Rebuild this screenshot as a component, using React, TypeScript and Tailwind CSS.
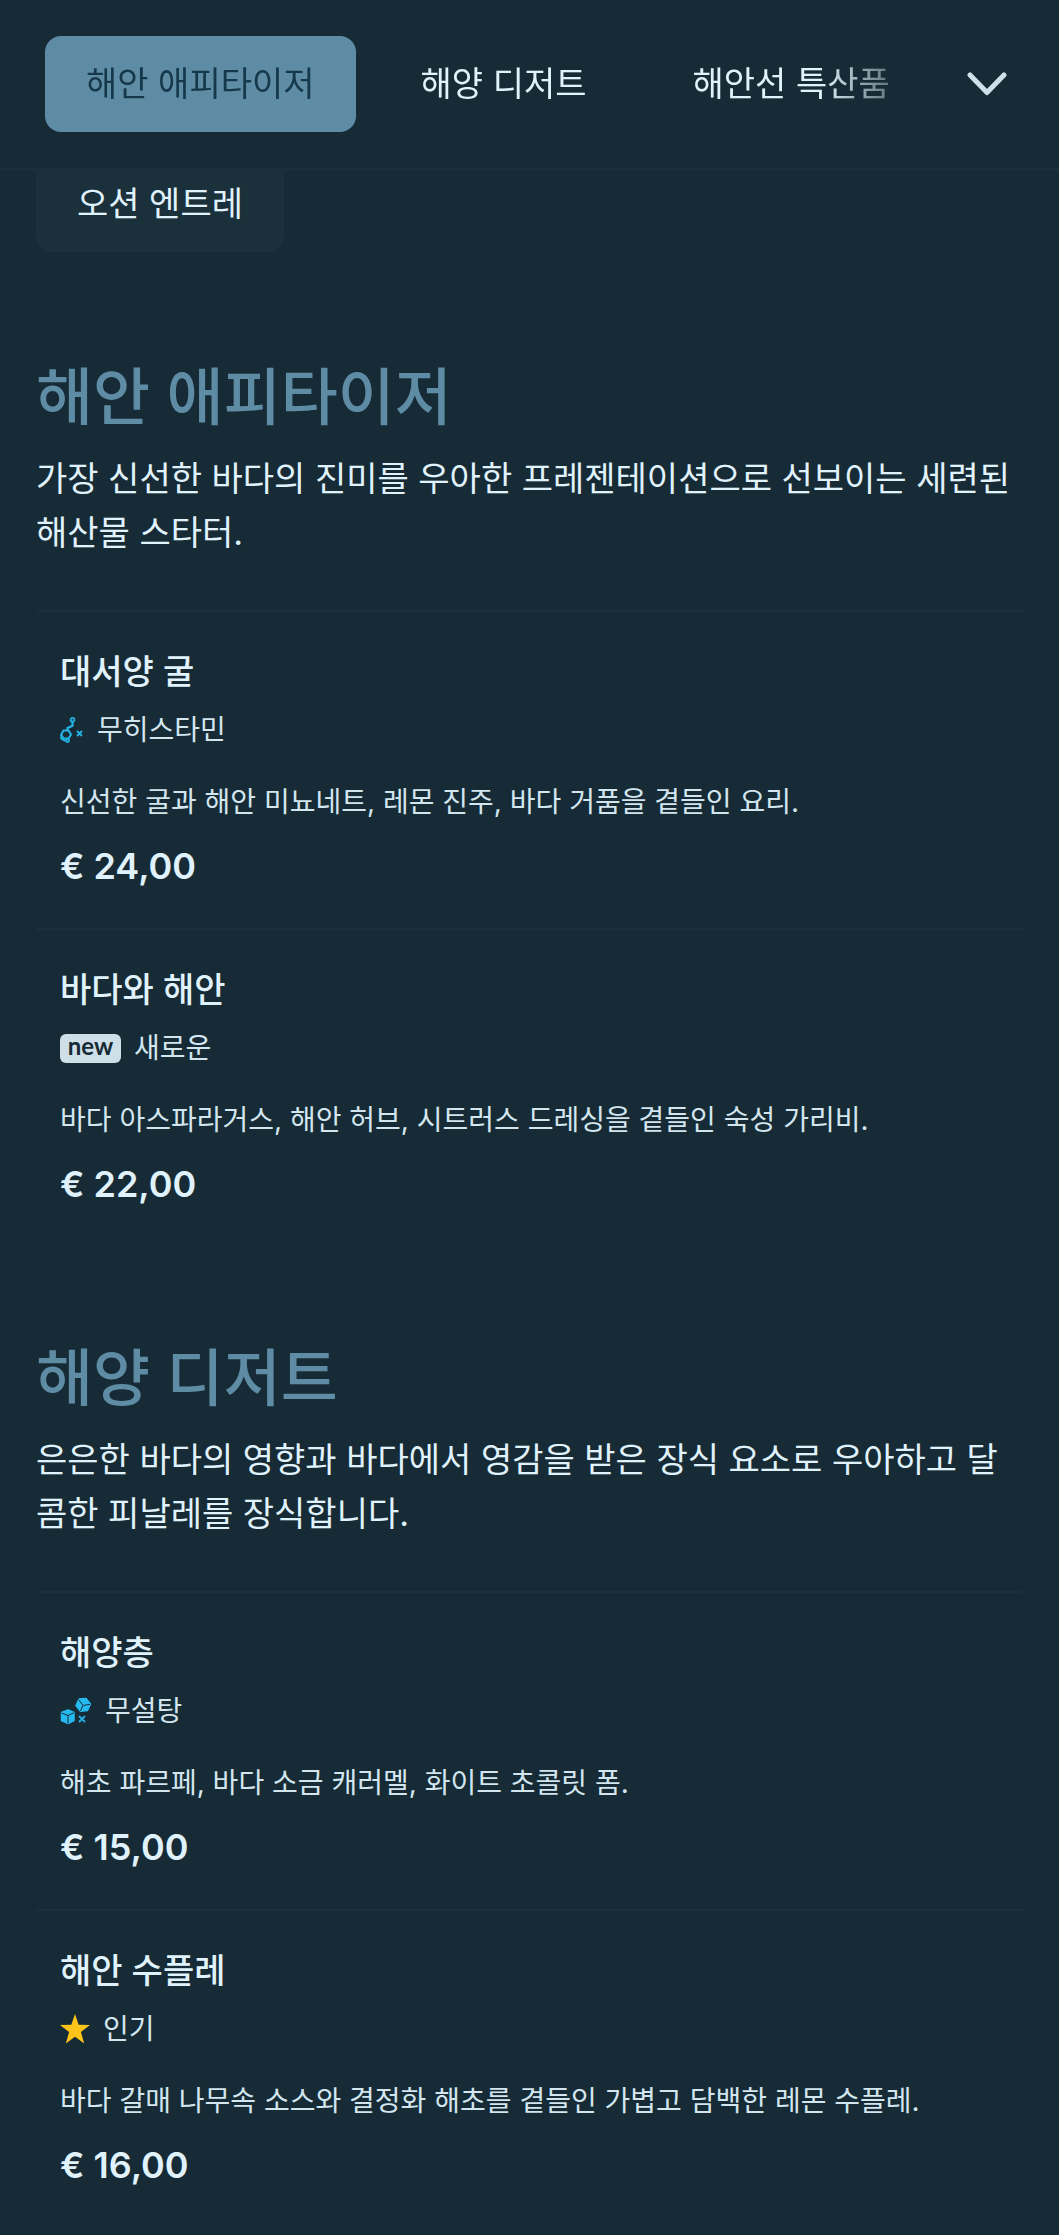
import { useState } from 'react';
import type { ReactNode } from 'react';

type Dish = {
  name: string;
  tag: string;
  icon: ReactNode;
  description: string;
  price: string;
};

type Category = {
  id: string;
  title: string;
  description: string;
  dishes: Dish[];
};

function HistamineIcon() {
  return (
    <svg viewBox="0 0 24 26" className="h-[26px] w-6" fill="none" stroke="#22b5e6" strokeWidth="1.8" aria-hidden="true">
      <circle cx="12.5" cy="2.8" r="1.9" />
      <path d="M12.500 4.700v4L7.500 11v3" strokeWidth="2.2" />
      <path d="M3.500 13.500h5l2.500 4-2.500 4h-5L1.200 17.500z" strokeWidth="2" />
      <path d="M1.200 17.500v4l4 2.500" />
      <circle cx="7.500" cy="23.500" r="1.500" />
      <path d="M17 14l5 5M22 14l-5 5" />
    </svg>
  );
}

function SugarIcon() {
  return (
    <svg viewBox="0 0 32 28" className="h-7 w-8" aria-hidden="true">
      <g fill="#26baf2" stroke="#26baf2" strokeWidth="1.5" strokeLinejoin="round">
        <path d="M19 2l7-.6 4.500 5.600-3 6.500-7 .8-4.500-5.800z" />
        <path d="M8 13l6 2.500v8L8 26.500l-6.500-3v-8z" />
      </g>
      <g fill="none" stroke="#162b35" strokeWidth="1">
        <path d="M18.500 2.500l4.500 6 7-1.200M23 8.500l-2.600 5.500" />
        <path d="M1.500 16L8 18.500l6-2.800M8 18.500v8" />
      </g>
      <path d="M19 19l6 6M25 19l-6 6" fill="none" stroke="#26a9dc" strokeWidth="2" />
    </svg>
  );
}

function StarIcon() {
  return (
    <svg viewBox="0 0 30 30" className="size-[30px]" aria-hidden="true">
      <path
        d="M15 0l3.700 10.800L30 11l-9.100 7 3.300 11.500L15 22.800 5.800 29.500 9.100 18 0 11l11.300-.2z"
        fill="#fcc419"
      />
    </svg>
  );
}

function NewBadge() {
  return (
    <span className="flex h-[29px] w-[61px] items-center justify-center rounded-md bg-[#cfdfe8] pb-1 font-['Lato','Open_Sans',sans-serif] text-[24px] leading-none font-bold text-[#162b35]">
      new
    </span>
  );
}

const categories: Category[] = [
  {
    id: 'appetizers',
    title: '해안 애피타이저',
    description: '가장 신선한 바다의 진미를 우아한 프레젠테이션으로 선보이는 세련된 해산물 스타터.',
    dishes: [
      {
        name: '대서양 굴',
        tag: '무히스타민',
        icon: <HistamineIcon />,
        description: '신선한 굴과 해안 미뇨네트, 레몬 진주, 바다 거품을 곁들인 요리.',
        price: '€ 24,00',
      },
      {
        name: '바다와 해안',
        tag: '새로운',
        icon: <NewBadge />,
        description: '바다 아스파라거스, 해안 허브, 시트러스 드레싱을 곁들인 숙성 가리비.',
        price: '€ 22,00',
      },
    ],
  },
  {
    id: 'desserts',
    title: '해양 디저트',
    description: '은은한 바다의 영향과 바다에서 영감을 받은 장식 요소로 우아하고 달콤한 피날레를 장식합니다.',
    dishes: [
      {
        name: '해양층',
        tag: '무설탕',
        icon: <SugarIcon />,
        description: '해초 파르페, 바다 소금 캐러멜, 화이트 초콜릿 폼.',
        price: '€ 15,00',
      },
      {
        name: '해안 수플레',
        tag: '인기',
        icon: <StarIcon />,
        description: '바다 갈매 나무속 소스와 결정화 해초를 곁들인 가볍고 담백한 레몬 수플레.',
        price: '€ 16,00',
      },
    ],
  },
];

const tabs = [
  { id: 'appetizers', label: '해안 애피타이저' },
  { id: 'desserts', label: '해양 디저트' },
  { id: 'specials', label: '해안선 특산품' },
];

function DishRow({ dish }: { dish: Dish }) {
  return (
    <li className="border-t-2 border-[#1a303b] px-6 pt-9 pb-[38px]">
      <h3 className="text-[34px] leading-[48px] font-medium">{dish.name}</h3>
      <div className="mt-[14px] flex h-10 items-center gap-[13px] text-[28px] leading-10 text-[#d3e6f0]">
        {dish.icon}
        <span>{dish.tag}</span>
      </div>
      <p className="mt-8 text-[28px] leading-10 text-[#d3e6f0]">{dish.description}</p>
      <p className="mt-5 text-[36px] leading-[48px] font-semibold">{dish.price}</p>
    </li>
  );
}

export default function App() {
  const [active, setActive] = useState('appetizers');

  return (
    <div className="min-h-screen bg-[#162b35] font-['Inter','Noto_Sans_CJK_KR',sans-serif] text-[#e0f2fc]">
      <header className="sticky top-0 z-10 flex items-start border-b-2 border-[#1a303b] bg-[#162b35] pt-9 pr-12 pb-9 pl-[45px]">
        <nav className="flex min-w-0 flex-1 gap-6 overflow-hidden [mask-image:linear-gradient(to_right,black_calc(100%-110px),transparent)]">
          {tabs.map((tab) => (
            <button
              key={tab.id}
              type="button"
              onClick={() => setActive(tab.id)}
              className={`h-24 shrink-0 rounded-2xl px-[41px] text-[34px] leading-[48px] whitespace-nowrap ${
                active === tab.id ? 'bg-[#5f8ca5] text-[#15384a]' : 'text-[#e0f2fc]'
              }`}
            >
              {tab.label}
            </button>
          ))}
        </nav>
        <button type="button" aria-label="메뉴 펼치기" className="ml-8 flex h-24 w-12 shrink-0 items-center justify-center">
          <svg viewBox="0 0 40 24" className="h-6 w-10" fill="none" stroke="#cfe0ea" strokeWidth="5" strokeLinecap="round" strokeLinejoin="round" aria-hidden="true">
            <path d="M3 3l17 17.500L37 3" />
          </svg>
        </button>
      </header>

      <main className="px-9">
        {/* tucked under the sticky header */}
        <button
          type="button"
          onClick={() => setActive('entrees')}
          className="-mt-[14px] mb-[13px] block h-24 rounded-2xl bg-[#1a303b] px-[41px] text-[34px] leading-[48px]"
        >
          오션 엔트레
        </button>

        {categories.map((category) => (
          <section key={category.id} id={category.id} className="pt-[97px]">
            <h2 className="text-[62px] leading-[72px] font-medium text-[#5f8ca5]">{category.title}</h2>
            <p className="mt-[18px] text-[34px] leading-[54px]">{category.description}</p>
            <ul className="mt-[50px]">
              {category.dishes.map((dish) => (
                <DishRow key={dish.name} dish={dish} />
              ))}
            </ul>
          </section>
        ))}
      </main>
    </div>
  );
}
